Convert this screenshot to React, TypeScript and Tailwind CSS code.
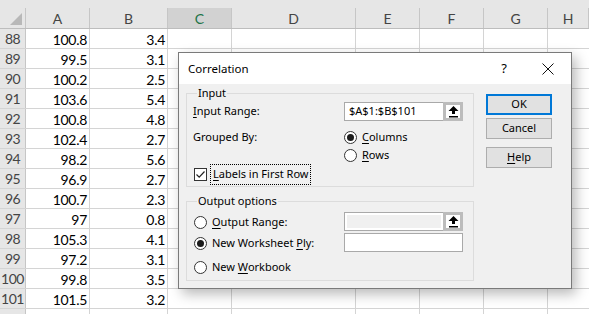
import React from "react";

const rows: [number, string, string][] = [
  [88, "100.8", "3.4"],
  [89, "99.5", "3.1"],
  [90, "100.2", "2.5"],
  [91, "103.6", "5.4"],
  [92, "100.8", "4.8"],
  [93, "102.4", "2.7"],
  [94, "98.2", "5.6"],
  [95, "96.9", "2.7"],
  [96, "100.7", "2.3"],
  [97, "97", "0.8"],
  [98, "105.3", "4.1"],
  [99, "97.2", "3.1"],
  [100, "99.8", "3.5"],
  [101, "101.5", "3.2"],
];

const cols = [
  { l: "A", w: "w-[64px]" },
  { l: "B", w: "w-[78px]" },
  { l: "C", w: "w-[64px]" },
  { l: "D", w: "w-[124px]" },
  { l: "E", w: "w-[64px]" },
  { l: "F", w: "w-[64px]" },
  { l: "G", w: "w-[64px]" },
  { l: "H", w: "flex-1" },
];

const sheetFont = { fontFamily: "Lato, 'Liberation Sans', sans-serif" };

const Radio = ({ checked }: { checked?: boolean }) => (
  <span className="w-[13px] h-[13px] rounded-full border border-[#333] bg-white flex items-center justify-center shrink-0">
    {checked && <span className="w-[7px] h-[7px] rounded-full bg-[#1b1b1b]" />}
  </span>
);

const UpArrow = () => (
  <svg width="11" height="12" viewBox="0 0 11 12">
    <path d="M5.5 0 L10.5 5 L7 5 L7 8 L4 8 L4 5 L0.5 5 Z" fill="#000" />
    <rect x="1" y="10" width="9" height="1.5" fill="#000" />
  </svg>
);

const RangeBox = ({ value, disabled }: { value?: string; disabled?: boolean }) => (
  <div className="flex h-[19px] w-[119px] border border-[#a9a9a9] bg-white">
    <div className="flex-1 p-[2px]">
      <div className={`h-full flex items-center pl-[2px] text-[11px] text-black ${disabled ? "bg-[#f0f0f0]" : ""}`}>
        {value}
      </div>
    </div>
    <div className="w-[20px] border-[3px] border-[#bcbcbc] bg-white flex items-center justify-center -my-px -mr-px">
      <UpArrow />
    </div>
  </div>
);

const U = ({ children }: { children: React.ReactNode }) => (
  <span className="underline underline-offset-[2px] decoration-1">{children}</span>
);

const Button = ({ children, def }: { children: React.ReactNode; def?: boolean }) => (
  <div
    className={`w-[66px] h-[21px] flex items-center justify-center bg-[#e1e1e1] text-[11px] text-black ${
      def ? "border-2 border-[#0078d7]" : "border border-[#adadad]"
    }`}
  >
    {children}
  </div>
);

const Dialog = () => (
  <div
    className="absolute left-[178px] top-[52px] w-[394px] h-[237px] border border-[#7a7a7a] bg-[#f0f0f0] shadow-[4px_5px_12px_rgba(0,0,0,0.28)] text-[11px] text-black"
    style={{ fontFamily: "'Noto Sans', 'Open Sans', sans-serif" }}
  >
    {/* Title bar */}
    <div className="h-[31px] bg-white flex items-center pl-[9px] pr-[8px]">
      <span className="text-[11.5px]">Correlation</span>
      <div className="ml-auto flex items-center gap-[14px]">
        <span className="w-[30px] text-center text-[13px] leading-none">?</span>
        <span className="w-[30px] flex justify-center">
          <svg width="12" height="12" viewBox="0 0 12 12">
            <path d="M0.5 0.5 L11.5 11.5 M11.5 0.5 L0.5 11.5" stroke="#111" strokeWidth="1" />
          </svg>
        </span>
      </div>
    </div>

    {/* Body */}
    <div className="flex px-[7px] pt-[1px] gap-[12px]">
      <div className="w-[288px]">
        <fieldset className="border border-[#dcdcdc] pl-[6px] pb-[1px]">
          <legend className="ml-[4px] px-px leading-[16px]">Input</legend>
          <div className="flex items-center h-[21px]">
            <div className="w-[151px]">
              <U>I</U>nput Range:
            </div>
            <RangeBox value="$A$1:$B$101" />
          </div>
          <div className="flex mt-[6px]">
            <div className="w-[151px] h-[18px] flex items-center">Grouped By:</div>
            <div>
              <div className="h-[18px] flex items-center gap-[5px]">
                <Radio checked />
                <span>
                  <U>C</U>olumns
                </span>
              </div>
              <div className="h-[18px] flex items-center gap-[5px]">
                <Radio />
                <span>
                  <U>R</U>ows
                </span>
              </div>
            </div>
          </div>
          <div className="h-[21px] flex items-center ml-px">
            <span className="w-[13px] h-[13px] border border-[#333] bg-white flex items-center justify-center">
              <svg width="11" height="11" viewBox="0 0 11 11">
                <path d="M1.5 5.5 L4.2 8.2 L9.5 2.5" stroke="#222" strokeWidth="1.2" fill="none" />
              </svg>
            </span>
            <span className="ml-[3px] h-[21px] flex items-center px-[2px] border border-dotted border-black">
              <U>L</U>abels in First Row
            </span>
          </div>
        </fieldset>

        <fieldset className="border border-[#dcdcdc] pl-[6px] pb-[2px] mt-[6px]">
          <legend className="ml-[4px] px-px leading-[16px]">Output options</legend>
          <div className="flex mt-[3px]">
            <div className="w-[151px] h-[21px] flex items-center gap-[5px] pl-px">
              <Radio />
              <span>
                <U>O</U>utput Range:
              </span>
            </div>
            <RangeBox disabled />
          </div>
          <div className="flex">
            <div className="w-[151px] h-[21px] flex items-center gap-[5px] pl-px">
              <Radio checked />
              <span>
                New Worksheet <U>P</U>ly:
              </span>
            </div>
            <div className="h-[19px] w-[119px] border border-[#a9a9a9] bg-white" />
          </div>
          <div className="flex mt-[3px]">
            <div className="w-[151px] h-[21px] flex items-center gap-[5px] pl-px">
              <Radio />
              <span>
                New <U>W</U>orkbook
              </span>
            </div>
          </div>
        </fieldset>
      </div>

      <div className="flex flex-col pt-[9px]">
        <Button def>OK</Button>
        <div className="mt-[3px]">
          <Button>Cancel</Button>
        </div>
        <div className="mt-[8px]">
          <Button>
            <U>H</U>elp
          </Button>
        </div>
      </div>
    </div>
  </div>
);

export default function App() {
  return (
    <div className="relative w-[589px] h-[314px] overflow-hidden bg-white" style={sheetFont}>
      {/* top strip */}
      <div className="h-[8px] bg-[#e6e6e6]" />
      {/* column headers */}
      <div className="flex h-[21px] bg-[#e6e6e6] border-b border-[#bdbdbd] text-[14px] text-[#444]">
        <div className="w-[26px] border-r border-[#c6c6c6] relative">
          <svg className="absolute right-[3px] bottom-[3px]" width="12" height="12" viewBox="0 0 12 12">
            <path d="M12 0 L12 12 L0 12 Z" fill="#b8b8b8" />
          </svg>
        </div>
        {cols.map((c) => (
          <div
            key={c.l}
            className={`${c.w} border-r border-[#c6c6c6] flex items-center justify-center ${
              c.l === "C" ? "bg-[#d2d2d2] text-[#217346]" : ""
            }`}
          >
            {c.l}
          </div>
        ))}
      </div>
      {/* rows */}
      {rows.map(([n, a, b]) => (
        <div key={n} className="flex h-[20px] border-b border-[#d4d4d4] text-[14px] text-black">
          <div className="w-[26px] bg-[#e6e6e6] border-r border-[#c6c6c6] flex items-center justify-center text-[#444] tracking-[-0.5px]">
            {n}
          </div>
          <div className="w-[64px] border-r border-[#d4d4d4] flex items-center justify-end pr-[2px] pt-px tracking-[-0.3px]">
            {a}
          </div>
          <div className="w-[78px] border-r border-[#d4d4d4] flex items-center justify-end pr-[2px] pt-px tracking-[-0.3px]">
            {b}
          </div>
          <div className="w-[64px] border-r border-[#d4d4d4]" />
          <div className="w-[124px] border-r border-[#d4d4d4]" />
          <div className="w-[64px] border-r border-[#d4d4d4]" />
          <div className="w-[64px] border-r border-[#d4d4d4]" />
          <div className="w-[64px] border-r border-[#d4d4d4]" />
          <div className="flex-1" />
        </div>
      ))}
      <div className="flex h-[20px]">
        <div className="w-[26px] bg-[#e6e6e6] border-r border-[#c6c6c6]" />
        <div className="w-[64px] border-r border-[#d4d4d4]" />
        <div className="w-[78px] border-r border-[#d4d4d4]" />
        <div className="w-[64px] border-r border-[#d4d4d4]" />
        <div className="w-[124px] border-r border-[#d4d4d4]" />
        <div className="w-[64px] border-r border-[#d4d4d4]" />
        <div className="w-[64px] border-r border-[#d4d4d4]" />
        <div className="w-[64px] border-r border-[#d4d4d4]" />
      </div>

      <Dialog />
    </div>
  );
}
